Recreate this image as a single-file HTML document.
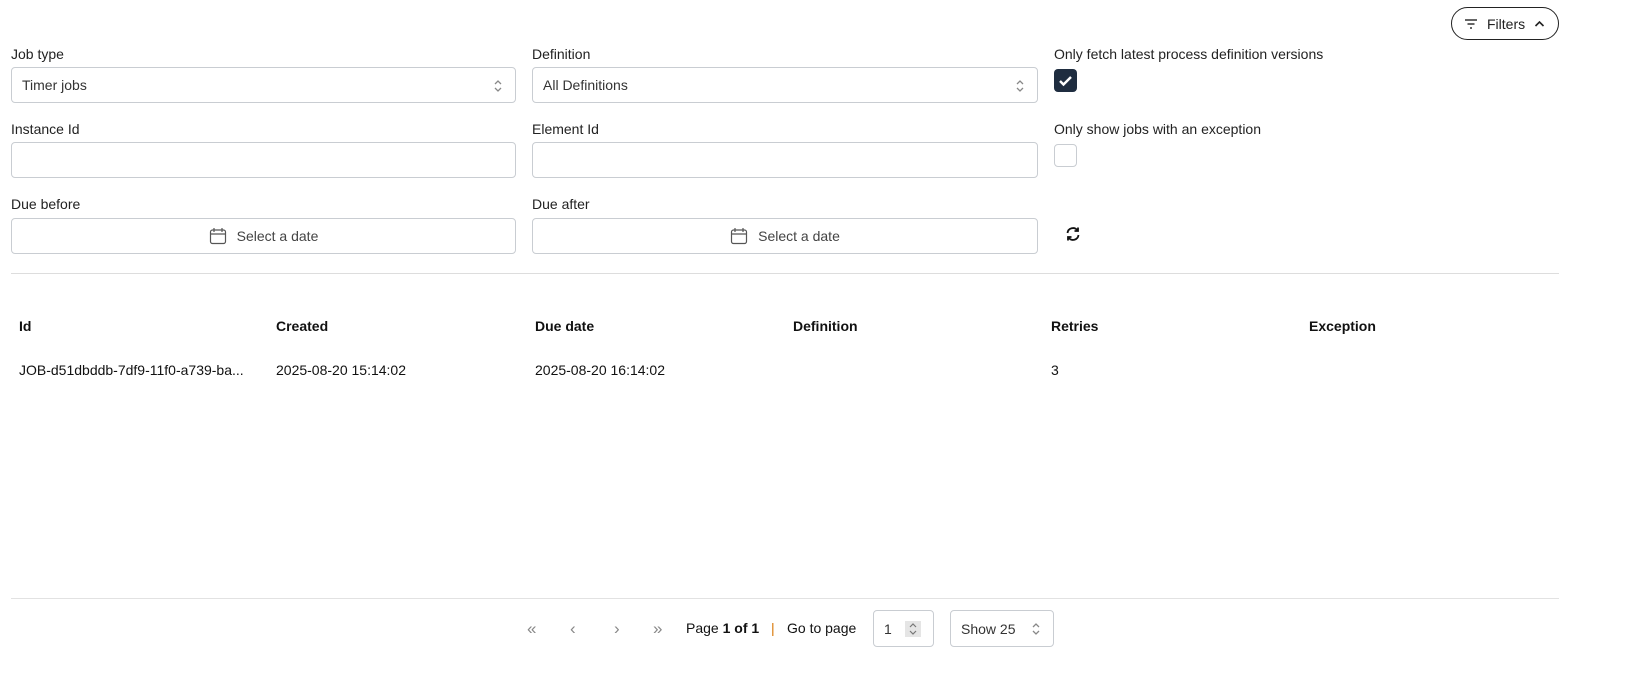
<!DOCTYPE html>
<html><head><style>
*{box-sizing:border-box;margin:0;padding:0}
body{width:1628px;height:696px;background:#fff;font-family:"Liberation Sans",sans-serif;font-size:14px;color:#1f2937;position:relative;overflow:hidden}
.abs{position:absolute}
.lbl{position:absolute;font-size:14px;color:#222}
.inp{position:absolute;height:36px;border:1px solid #c9cdd2;border-radius:4px;background:#fff;font-size:14px;color:#333;display:flex;align-items:center}
.th{position:absolute;top:318px;font-weight:bold;font-size:14px;color:#111}
.td{position:absolute;top:362px;font-size:14px;color:#111}
.cb{position:absolute;width:23px;height:23px;border-radius:4px}
</style></head><body>
<div class="abs" style="left:1451px;top:7px;width:108px;height:33px;border:1px solid #222;border-radius:17px;display:flex;align-items:center;padding-left:12px;font-size:14px;color:#222">
<svg width="14" height="12" viewBox="0 0 14 12"><path d="M1 2h12M3.5 6h7M6 10h2" stroke="#333" stroke-width="1.5"/></svg>
<span style="margin-left:9px">Filters</span>
<svg style="margin-left:9px" width="11" height="8" viewBox="0 0 11 8"><path d="M1.5 6L5.5 2l4 4" stroke="#222" stroke-width="1.6" fill="none"/></svg>
</div>

<div class="lbl" style="left:11px;top:46px">Job type</div>
<div class="inp" style="left:11px;top:67px;width:505px;padding-left:10px">Timer jobs
<svg class="abs" style="right:12px;top:11px" width="10" height="14" viewBox="0 0 10 14"><path d="M2 5l3-3 3 3M2 9l3 3 3-3" stroke="#888" stroke-width="1.3" fill="none"/></svg></div>
<div class="lbl" style="left:532px;top:46px">Definition</div>
<div class="inp" style="left:532px;top:67px;width:506px;padding-left:10px">All Definitions
<svg class="abs" style="right:12px;top:11px" width="10" height="14" viewBox="0 0 10 14"><path d="M2 5l3-3 3 3M2 9l3 3 3-3" stroke="#888" stroke-width="1.3" fill="none"/></svg></div>
<div class="lbl" style="left:1054px;top:46px">Only fetch latest process definition versions</div>
<div class="cb" style="left:1054px;top:69px;background:#1f2d40"><svg width="23" height="23" viewBox="0 0 23 23"><path d="M6 12l3.5 3.5L17 8" stroke="#fff" stroke-width="2.4" fill="none"/></svg></div>

<div class="lbl" style="left:11px;top:121px">Instance Id</div>
<div class="inp" style="left:11px;top:142px;width:505px"></div>
<div class="lbl" style="left:532px;top:121px">Element Id</div>
<div class="inp" style="left:532px;top:142px;width:506px"></div>
<div class="lbl" style="left:1054px;top:121px">Only show jobs with an exception</div>
<div class="cb" style="left:1054px;top:144px;border:1px solid #c9cdd2"></div>

<div class="lbl" style="left:11px;top:196px">Due before</div>
<div class="inp" style="left:11px;top:218px;width:505px;justify-content:center;color:#444">
<svg width="18" height="18" viewBox="0 0 18 18" style="margin-right:10px"><rect x="1.5" y="3" width="15" height="13.5" rx="2" stroke="#555" stroke-width="1.2" fill="none"/><path d="M1.5 7h15M5 1v4M13 1v4" stroke="#555" stroke-width="1.2"/></svg>Select a date</div>
<div class="lbl" style="left:532px;top:196px">Due after</div>
<div class="inp" style="left:532px;top:218px;width:506px;justify-content:center;color:#444">
<svg width="18" height="18" viewBox="0 0 18 18" style="margin-right:10px"><rect x="1.5" y="3" width="15" height="13.5" rx="2" stroke="#555" stroke-width="1.2" fill="none"/><path d="M1.5 7h15M5 1v4M13 1v4" stroke="#555" stroke-width="1.2"/></svg>Select a date</div>
<svg class="abs" style="left:1065px;top:226px" width="16" height="16" viewBox="0 0 16 16"><path d="M2.5 7A5.5 5.5 0 0 1 12.5 4.5M13.5 9A5.5 5.5 0 0 1 3.5 11.5" stroke="#111" stroke-width="1.8" fill="none"/><path d="M13 1.5v3.5h-3.5M3 14.5v-3.5h3.5" stroke="#111" stroke-width="1.8" fill="none"/></svg>

<div class="abs" style="left:11px;top:273px;width:1548px;height:1px;background:#ddd"></div>

<div class="th" style="left:19px">Id</div>
<div class="th" style="left:276px">Created</div>
<div class="th" style="left:535px">Due date</div>
<div class="th" style="left:793px">Definition</div>
<div class="th" style="left:1051px">Retries</div>
<div class="th" style="left:1309px">Exception</div>
<div class="td" style="left:19px">JOB-d51dbddb-7df9-11f0-a739-ba...</div>
<div class="td" style="left:276px">2025-08-20 15:14:02</div>
<div class="td" style="left:535px">2025-08-20 16:14:02</div>
<div class="td" style="left:1051px">3</div>

<div class="abs" style="left:11px;top:598px;width:1548px;height:1px;background:#e2e2e2"></div>
<div class="abs" style="left:527px;top:619px;font-size:17px;color:#888">«</div>
<div class="abs" style="left:570px;top:619px;font-size:17px;color:#888">‹</div>
<div class="abs" style="left:614px;top:619px;font-size:17px;color:#888">›</div>
<div class="abs" style="left:653px;top:619px;font-size:17px;color:#888">»</div>
<div class="abs" style="left:686px;top:620px;color:#111">Page <b>1 of 1</b></div>
<div class="abs" style="left:771px;top:620px;color:#d97706">|</div>
<div class="abs" style="left:787px;top:620px;color:#111">Go to page</div>
<div class="inp" style="left:873px;top:610px;width:61px;height:37px;padding-left:10px">1
<div class="abs" style="left:31px;top:10px;width:16px;height:16px;background:#e5e5e5"><svg width="16" height="16" viewBox="0 0 16 16"><path d="M5 6l3-3 3 3M5 10l3 3 3-3" stroke="#777" stroke-width="1.2" fill="none"/></svg></div></div>
<div class="inp" style="left:950px;top:610px;width:104px;height:37px;padding-left:10px">Show 25
<svg class="abs" style="right:12px;top:11px" width="10" height="14" viewBox="0 0 10 14"><path d="M2 5l3-3 3 3M2 9l3 3 3-3" stroke="#888" stroke-width="1.3" fill="none"/></svg></div>
</body></html>
